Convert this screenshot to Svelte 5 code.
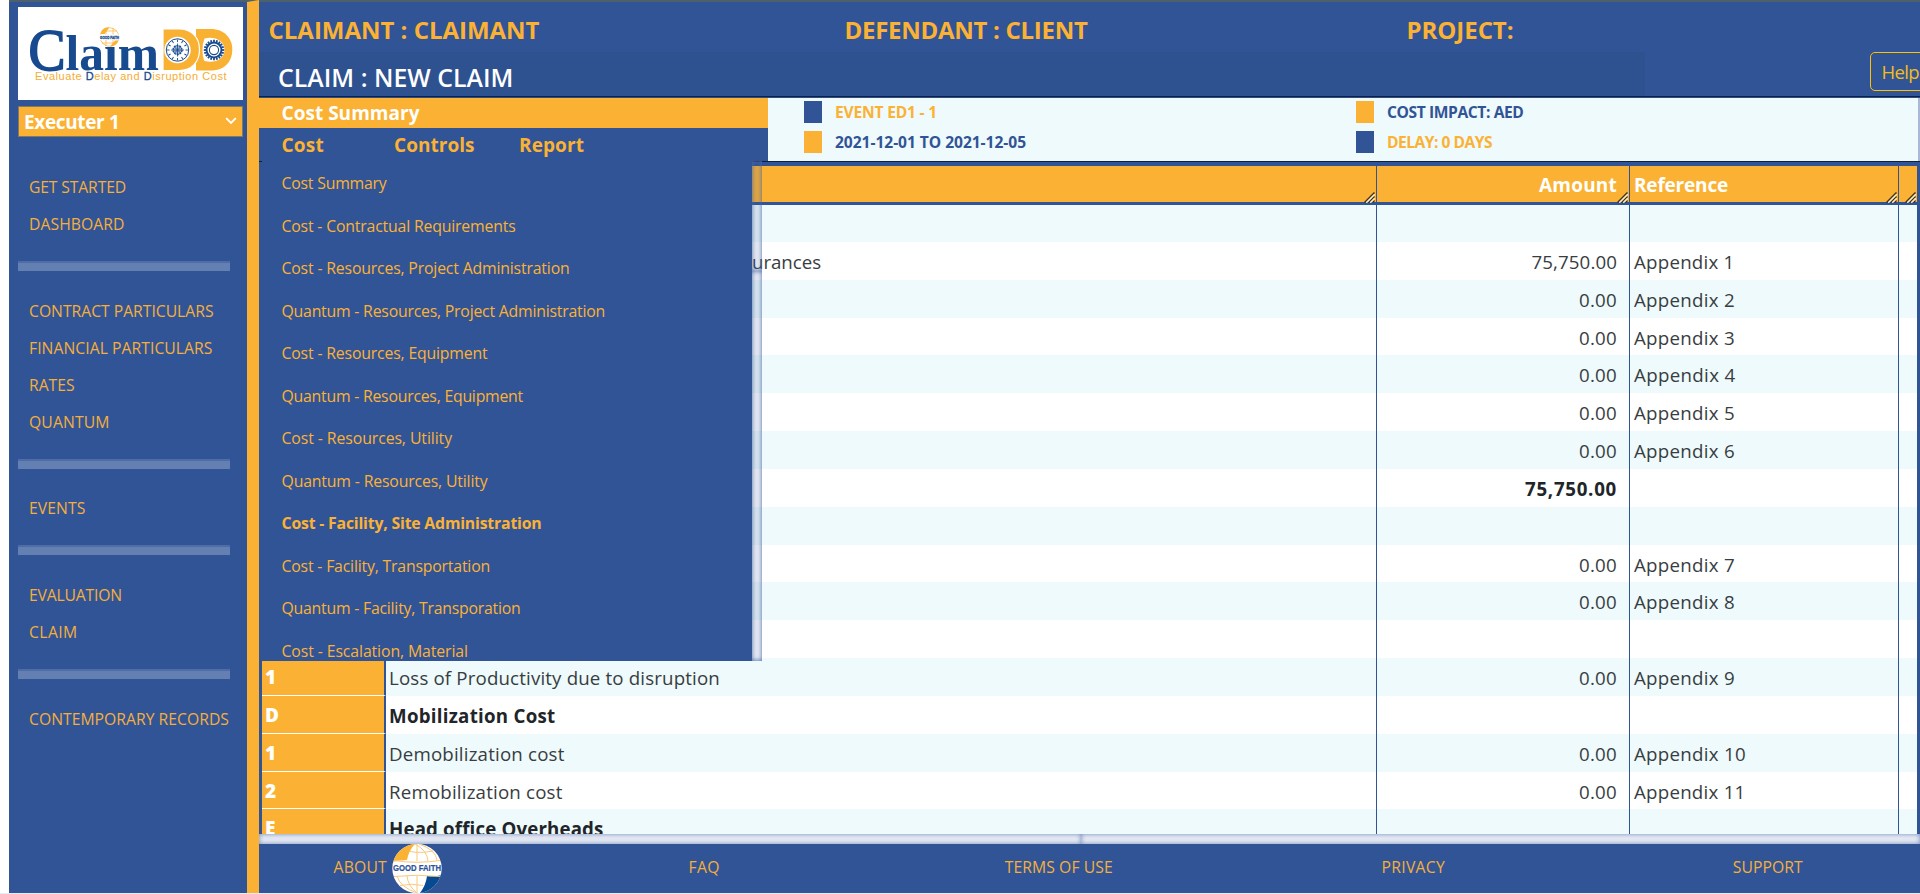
<script>
  const nav = [
    [['GET STARTED', 95], ['DASHBOARD', 93.5]],
    [['CONTRACT PARTICULARS', 182.5], ['FINANCIAL PARTICULARS', 181.5], ['RATES', 43.5], ['QUANTUM', 78.5]],
    [['EVENTS', 54.5]],
    [['EVALUATION', 91], ['CLAIM', 46.5]],
    [['CONTEMPORARY RECORDS', 198]],
  ];

  const menu = [
    ['Cost Summary', 103],
    ['Cost - Contractual Requirements', 232],
    ['Cost - Resources, Project Administration', 286],
    ['Quantum - Resources, Project Administration', 321.5],
    ['Cost - Resources, Equipment', 204],
    ['Quantum - Resources, Equipment', 239.5],
    ['Cost - Resources, Utility', 168.5],
    ['Quantum - Resources, Utility', 204],
    ['Cost - Facility, Site Administration', 258],
    ['Cost - Facility, Transportation', 206.5],
    ['Quantum - Facility, Transporation', 237],
    ['Cost - Escalation, Material', 184.4],
  ];
  const current = 8;

  // Each label goes with its drawn width.
  const rows = [
    { },
    { name: 'urances', nw: 67, tail: true, amount: '75,750.00', aw: 83.5, ref: 'Appendix 1', rw: 98.5 },
    { amount: '0.00', aw: 36, ref: 'Appendix 2', rw: 99 },
    { amount: '0.00', aw: 36, ref: 'Appendix 3', rw: 99 },
    { amount: '0.00', aw: 36, ref: 'Appendix 4', rw: 99.5 },
    { amount: '0.00', aw: 36, ref: 'Appendix 5', rw: 99 },
    { amount: '0.00', aw: 36, ref: 'Appendix 6', rw: 99 },
    { amount: '75,750.00', aw: 90, bold: true },
    { },
    { amount: '0.00', aw: 36, ref: 'Appendix 7', rw: 99 },
    { amount: '0.00', aw: 36, ref: 'Appendix 8', rw: 99 },
    { },
    { no: '1', name: 'Loss of Productivity due to disruption', nw: 329, amount: '0.00', aw: 36, ref: 'Appendix 9', rw: 99 },
    { no: 'D', name: 'Mobilization Cost', nw: 164.5, bold: true },
    { no: '1', name: 'Demobilization cost', nw: 173.5, amount: '0.00', aw: 36, ref: 'Appendix 10', rw: 110 },
    { no: '2', name: 'Remobilization cost', nw: 171.5, amount: '0.00', aw: 36, ref: 'Appendix 11', rw: 109.5 },
    { no: 'E', name: 'Head office Overheads', nw: 212.5, bold: true },
  ];

  const teeth = Array.from({ length: 20 }, (_, i) => i * 18);
  const ticks = Array.from({ length: 12 }, (_, i) => i * 30);

  // Tracks a label so that it fills the given width.
  function fit(node, width) {
    const natural = node.getBoundingClientRect().width;
    node.style.letterSpacing = `${(width + 2 - natural) / node.textContent.length}px`;
  }
</script>

{#snippet grip()}
  <svg class="grip" width="11" height="11" viewBox="0 0 11 11">
    <path d="M0.500 10.500 10.500 .5M4.500 10.500 10.500 4.500M8.500 10.500 10.500 8.500" stroke="#3d3425" stroke-width="1.500" />
    <path d="M2.300 10.800 10.800 2.300M6.300 10.800 10.800 6.300" stroke="#fff0cf" stroke-width="1.300" />
  </svg>
{/snippet}

<div class="app">
  <aside>
    <div class="logo">
      <svg width="225" height="93" viewBox="18 7 225 93">
        <g font-family="'Liberation Serif', serif" fill="#174a8f">
          <text x="28.500" y="70" font-size="60" stroke="#174a8f" stroke-width="1.800" textLength="37" lengthAdjust="spacingAndGlyphs">C</text>
          <text x="65.500" y="70" font-size="50" font-weight="bold" textLength="93.500" lengthAdjust="spacingAndGlyphs">laım</text>
        </g>
        <circle cx="109.500" cy="37" r="9.300" fill="#fff" stroke="#fbb234" stroke-width=".7" />
        <path d="M100.500 34C101.500 28 106 27 109.500 27.500L104.500 34ZM118.500 40.500C117 45 113 46.500 110 46.500L115 40.500Z" fill="#fbb234" />
        <path d="M106 46V28M113 46V28M102 31H117M102 43H117" stroke="#fbb234" stroke-width=".7" fill="none" />
        <rect x="99" y="34.500" width="21" height="5.500" fill="#fff" />
        <text x="100" y="38.700" font-family="'Liberation Sans', sans-serif" font-weight="bold" font-size="4" fill="#174a8f" stroke="#174a8f" stroke-width=".3" textLength="19" lengthAdjust="spacingAndGlyphs">GOOD FAITH</text>

        <path d="M196 29H211C224 29 232.300 38 232.300 49.500C232.300 62 224 70.500 211 70.500H196Z" fill="#f9b134" />
        <path d="M163 29H179C192 29 199.500 38 199.500 49.500C199.500 62 192 70.500 179 70.500H163Z" fill="#f9b134" stroke="#fff" stroke-width="1.200" />
        <path d="M204.500 38.500C215 36 224.500 41 224.500 50C224.500 59 215 63.500 204.500 61Q202.500 57 202.500 50Q202.500 43 204.500 38.500Z" fill="#fff" />
        <circle cx="177.500" cy="50" r="13.200" fill="#fff" />
        <circle cx="177.500" cy="50" r="11.200" fill="none" stroke="#174a8f" stroke-width="1" />
        {#each ticks as a}
          <path d="M177.500 39.500V42" stroke="#174a8f" stroke-width=".9" transform="rotate({a} 177.500 50)" />
        {/each}
        <circle cx="177.500" cy="50" r="4.500" fill="#9fb2ce" stroke="#174a8f" stroke-width="1.300" stroke-dasharray="2 .8" />
        <path d="M177.500 43.500V56.500M171 50H184M174.500 47L180.500 53M180.500 47L174.500 53" stroke="#174a8f" stroke-width=".8" />
        {#each teeth as a}
          <path d="M214 39.800V42.500" stroke="#174a8f" stroke-width="1.800" transform="rotate({a} 214 50)" />
        {/each}
        <circle cx="214" cy="50" r="7.400" fill="none" stroke="#174a8f" stroke-width="1.800" />
        <circle cx="214" cy="50" r="4.600" fill="none" stroke="#174a8f" stroke-width="1.100" />
        <text x="35" y="80" font-family="'Liberation Sans', sans-serif" font-size="11" fill="#f4ad35" textLength="191.500">Evaluate <tspan fill="#174a8f" stroke="#174a8f" stroke-width=".3">D</tspan>elay and <tspan fill="#174a8f" stroke="#174a8f" stroke-width=".3">D</tspan>isruption Cost</text>
      </svg>
    </div>
    <div class="select">
      <span use:fit={93.5}>Executer 1</span>
      <svg width="12" height="8" viewBox="0 0 12 8"><path d="M1.200 1.200 6 6 10.800 1.200" fill="none" stroke="#fff" stroke-width="1.900" /></svg>
    </div>
    <nav>
      {#each nav as group, g}
        {#if g}<div class="divider"></div>{/if}
        {#each group as [label, w]}
          <div class="link"><span use:fit={w}>{label}</span></div>
        {/each}
      {/each}
    </nav>
  </aside>

  <main>
    <header>
      <div class="parties">
        <div class="claimant"><span use:fit={269}>CLAIMANT : CLAIMANT</span></div>
        <div class="defendant"><span use:fit={241}>DEFENDANT : CLIENT</span></div>
        <div><span use:fit={105}>PROJECT:</span></div>
      </div>
      <div class="claim">
        <h1><span use:fit={233.5}>CLAIM : NEW CLAIM</span></h1>
        <button><span use:fit={35.5}>Help</span></button>
      </div>
    </header>

    <section class="sub">
      <div class="tabs">
        <div class="title"><span use:fit={136}>Cost Summary</span></div>
        <div class="links">
          <div class="cost"><span use:fit={40.500}>Cost</span></div>
          <div class="controls"><span use:fit={78.500}>Controls</span></div>
          <div><span use:fit={63}>Report</span></div>
        </div>
      </div>
      <div class="event">
        <div><i></i><span class="o" use:fit={100}>EVENT ED1 - 1</span></div>
        <div><i class="bo"></i><span use:fit={189}>2021-12-01 TO 2021-12-05</span></div>
      </div>
      <div class="event">
        <div><i class="bo"></i><span use:fit={134.500}>COST IMPACT: AED</span></div>
        <div><i></i><span class="o" use:fit={103}>DELAY: 0 DAYS</span></div>
      </div>
    </section>

    <section class="table">
      <div class="row head">
        <div class="no"></div>
        <div class="name">{@render grip()}</div>
        <div class="amount"><span use:fit={76}>Amount</span>{@render grip()}</div>
        <div class="ref"><span use:fit={92}>Reference</span>{@render grip()}</div>
        <div class="end">{@render grip()}</div>
      </div>
      {#each rows as r}
        <div class="row" class:bold={r.bold}>
          <div class="no">{r.no ?? ''}</div>
          <div class="name" class:tail={r.tail}>{#if r.name}<span use:fit={r.nw}>{r.name}</span>{/if}</div>
          <div class="amount">{#if r.amount}<span use:fit={r.aw}>{r.amount}</span>{/if}</div>
          <div class="ref">{#if r.ref}<span use:fit={r.rw}>{r.ref}</span>{/if}</div>
          <div class="end"></div>
        </div>
      {/each}
    </section>

    <div class="hbar"><div></div><div></div></div>

    <footer>
      <div class="about">
        <span use:fit={51.500}>ABOUT</span>
        <svg width="50" height="49" viewBox="0 0 50 49">
          <clipPath id="globe"><circle cx="25" cy="24.500" r="24.700" /></clipPath>
          <g clip-path="url(#globe)">
            <rect width="50" height="49" fill="#fff" />
            <path d="M0 16V0H23C19 4 16 10 15 16Q7 16 0 18Z" fill="#fbb234" />
            <path d="M35 32Q43 33 50 31V49H28Q34 41 35 32Z" fill="#064b91" />
            <g fill="none" stroke="#f8c87a" stroke-width="1">
              <path d="M2 16.500Q25 20 48 16.500M2 32.500Q25 30 48 32.500M18 7.500Q28 9.500 41 7M8 41.500Q20 39 31 41.500M23 0Q35 6 36 17M25 0V17M27 0Q44 6 45 16M5 32Q8 43 25 49M15 32Q16 42 25 49M25 32V49" />
            </g>
          </g>
          <text x="1" y="27.400" font-family="'Liberation Sans', sans-serif" font-size="8.300" font-weight="bold" fill="#2b529b" stroke="#2b529b" stroke-width=".2" textLength="48" lengthAdjust="spacingAndGlyphs">GOOD FAITH</text>
        </svg>
      </div>
      <div class="item"><span use:fit={29.500}>FAQ</span></div>
      <div class="item"><span use:fit={106}>TERMS OF USE</span></div>
      <div class="item"><span use:fit={61.500}>PRIVACY</span></div>
      <div class="item"><span use:fit={68}>SUPPORT</span></div>
    </footer>

    <div class="dropdown">
      <ul>
        {#each menu as [label, w], i}
          <li class:active={i === current}><span use:fit={w}>{label}</span></li>
        {/each}
      </ul>
      <div class="vbar"><div></div><div></div></div>
    </div>
  </main>
</div>

<style>
  :global(body) { margin: 0; background: #fff; overflow: hidden; }
  .app {
    --blue: #315496; --gold: #fbb234; --mint: #eefafb;
    display: flex; box-sizing: border-box; width: 1920px; height: 894px;
    padding-left: 9px; border-bottom: 1px solid #e6eaf4; overflow: hidden;
    font-family: 'Open Sans', 'Noto Sans', sans-serif; white-space: nowrap;
  }
  span { display: inline-block; }
  aside {
    box-sizing: border-box; width: 250px; flex: none; background: var(--blue);
    border-right: 12px solid var(--gold); border-top: 2px solid #4d616d;
    padding: 5px 0 0 9px;
  }
  .logo { width: 225px; height: 93px; background: #fff; }
  .logo svg { display: block; }
  .select {
    display: flex; align-items: center; justify-content: space-between;
    box-sizing: border-box; width: 225px; height: 31px; margin-top: 6px; padding: 1px 5px 0 5px;
    background: var(--gold); border: 1px solid #807c62; color: #fff;
    font-size: 19px; font-weight: 700;
  }
  .select svg { margin-top: -2px; }
  nav { padding-top: 31px; color: #f4af3c; font-size: 15.700px; }
  .link { height: 37px; line-height: 38.500px; padding-left: 11px; }
  .divider { box-sizing: border-box; width: 212px; height: 10px; margin: 19.100px 0 20.600px; background: #6480b2; border-top: 2px solid #4e6ca5; }

  main { position: relative; display: flex; flex-direction: column; width: 1661px; height: 893px; background: var(--blue); }
  header { height: 98px; box-sizing: border-box; border-top: 2px solid #4d616d; border-bottom: 1px solid #2b4d8e; }
  .parties { display: flex; height: 50px; line-height: 56px; color: var(--gold); font-size: 24px; font-weight: 700; }
  .claimant { width: 566px; padding-left: 9.500px; }
  .defendant { width: 562px; padding-left: 10px; }
  .claim { display: flex; height: 45px; justify-content: space-between; border-bottom: 1px solid #10203f; box-sizing: border-box; }
  h1 { margin: 0; width: 1386px; height: 44px; background: #2e5190; border-radius: 4px 4px 0 0; box-sizing: border-box; padding-left: 19px; line-height: 51px; font-size: 24.800px; font-weight: 600; color: #fff; }
  button {
    box-sizing: border-box; width: 60px; height: 39px; margin: 0 -10px 0 0; padding: 0 0 0 10.500px; text-align: left;
    background: none; border: 1px solid #ffc107; border-radius: 5px; color: #f3bd18; font: 18.500px/38px 'Open Sans', sans-serif;
  }

  .sub { display: flex; height: 68px; box-sizing: border-box; background: var(--mint); border-bottom: 4px solid var(--blue); box-shadow: inset 0 -1px #10203f, inset -2px 0 #a9b9d5; }
  .tabs { width: 509px; height: 63px; font-weight: 700; font-size: 19px; background: var(--blue); }
  .title { height: 30px; line-height: 31.500px; padding-left: 22.500px; background: var(--gold); color: #fff; }
  .links { display: flex; height: 33px; line-height: 35.500px; padding-left: 22.500px; color: var(--gold); }
  .cost { width: 112.500px; }
  .controls { width: 125px; }
  .event { display: flex; flex-direction: column; gap: 8px; width: 516px; padding: 3px 0 0 36px; font-size: 15.600px; font-weight: 700; color: #315496; }
  .event div { display: flex; height: 22px; line-height: 23px; align-items: center; }
  .event i { width: 18px; height: 22px; margin-right: 13px; background: var(--blue); }
  .event .bo { background: var(--gold); }
  .event .o { color: var(--gold); }

  .table { height: 668px; overflow: hidden; box-sizing: border-box; padding: 0 3px 0 3px; }
  .row { display: flex; height: 37.830px; line-height: 39px; background: #fff; color: #383d42; font-size: 18.700px; }
  .row:nth-child(even) { background: var(--mint); }
  .row:nth-child(2) { height: 37px; }
  .row > div { box-sizing: border-box; flex: none; }
  .row .no { width: 124px; padding-left: 3px; background: var(--gold); border-right: 2px solid var(--blue); border-bottom: 1px solid #fff; color: #fff; font-weight: 800; font-size: 19px; }
  .row .name { width: 991px; padding-left: 3px; border-right: 1px solid #315496; }
  .row .tail { padding-left: 366px; }
  .row .amount { width: 253px; text-align: right; padding-right: 12px; border-right: 1px solid #315496; }
  .row .ref { width: 269px; padding-left: 4px; border-right: 1px solid #315496; }
  .row .end { flex: 1; }
  .bold { font-weight: 700; color: #212529; }
  .head { height: 39px; line-height: 38px; background: var(--gold); border-bottom: 3px solid var(--blue); box-sizing: border-box; color: #fff; font-size: 19px; font-weight: 700; }
  .head > div { position: relative; }
  .head .no { border-bottom: 0; }
  .grip { position: absolute; right: 1px; bottom: -1px; }

  .hbar { display: flex; height: 10px; }
  .hbar div { width: 822px; background: #e7ebf4; box-shadow: inset 0 0 5px #6f8abb; }
  .hbar div + div { flex: 1; }
  footer { display: flex; height: 49px; line-height: 47.500px; overflow: hidden; color: #f4af3c; font-size: 15.700px; }
  .about { display: flex; flex: none; width: 268px; box-sizing: border-box; padding-left: 74.500px; }
  .about svg { margin-left: 5px; }
  .item { flex: none; width: 354.500px; text-align: center; }

  .dropdown { position: absolute; left: 3px; top: 161px; width: 500px; height: 500px; display: flex; overflow: hidden; }
  ul { list-style: none; margin: 0; padding: 1px 0 0 19.500px; width: 490px; box-sizing: border-box; background: var(--blue); color: var(--gold); font-size: 15.800px; }
  li { height: 42.500px; line-height: 42.500px; }
  .active { font-weight: 700; }
  .vbar { width: 10px; display: flex; flex-direction: column; }
  .vbar div { height: 110px; box-shadow: inset 0 0 5px #4a6ba9; background: rgba(49, 84, 150, .12); }
  .vbar div + div { flex: 1; }
</style>
